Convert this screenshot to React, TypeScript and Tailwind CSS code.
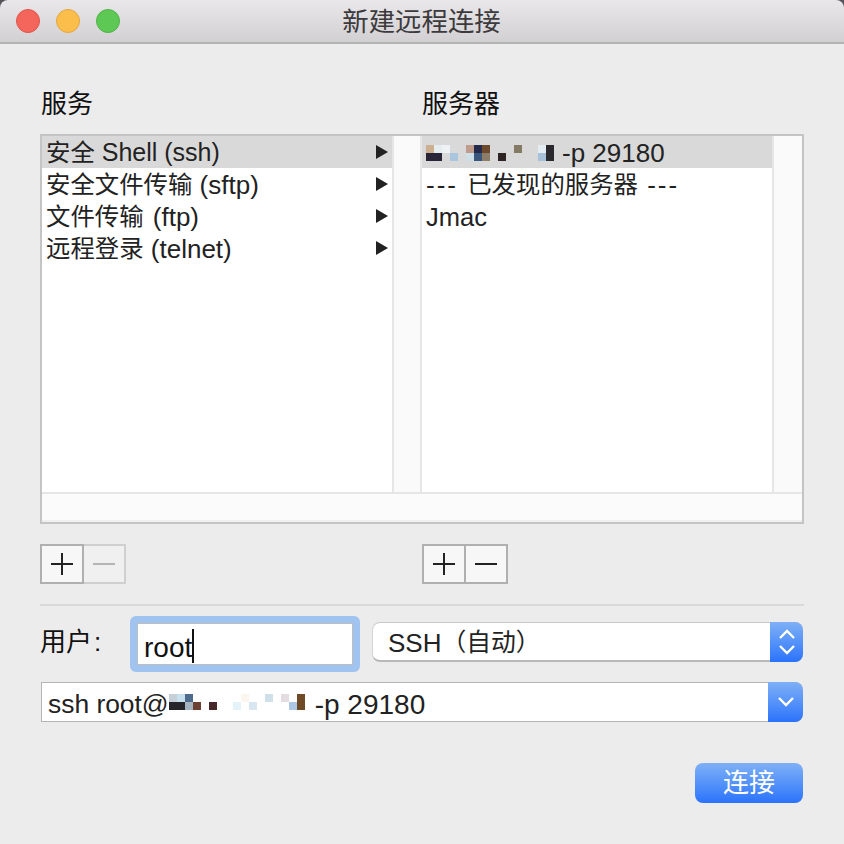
import React from 'react';

const FONT = "font-['Liberation_Sans','Noto_Sans_CJK_SC',sans-serif]";

type Block = [number, number, string];

// mosaic over the redacted host name
const hostA: Block[] = [
  [0, 0, '#cdb08f'], [0, 1, '#2a2438'], [1, 1, '#2a2438'], [1, 0, '#e6edf0'], [2, 0, '#eef2f4'], [3, 1, '#a9c6de'],
  [5, 0, '#bf9c8c'], [6, 0, '#242a4a'], [7, 0, '#6d4a2c'], [5, 1, '#cfdfe8'], [6, 1, '#37577d'], [7, 1, '#8d7c68'],
  [9, 1, '#2f2424'], [11, 0, '#857a63'], [14, 0, '#e3ecf2'], [14, 1, '#a7c1d9'], [15, 0, '#2a2a2e'], [15, 1, '#2a2a2e'],
];

const hostB: Block[] = [
  [0, 0, '#c5d0d8'], [1, 0, '#c6e0ee'], [2, 0, '#4d6b8c'], [0, 1, '#26262a'], [1, 1, '#26262a'], [2, 1, '#a3b3c0'],
  [3, 1, '#6d4034'], [5, 1, '#47282a'], [8, 1, '#e4f3fa'], [9, 0, '#fbf7ee'], [10, 1, '#d8e6f2'], [12, 0, '#cfe0ea'],
  [14, 0, '#e3dce0'], [15, 1, '#acc8e4'], [16, 0, '#6e4a26'], [16, 1, '#6e4a26'],
];

const Mosaic = ({ blocks, cols }: { blocks: Block[]; cols: number }) => (
  <svg width={cols * 8} height={16} className="shrink-0" shapeRendering="crispEdges">
    {blocks.map(([x, y, c], i) => (
      <rect key={i} x={x * 8} y={y * 8} width={8} height={8} fill={c} />
    ))}
  </svg>
);

const Cjk = ({ children }: { children: React.ReactNode }) => <span className="text-[24.4px]">{children}</span>;

const Row = ({ label, selected, arrow }: { label: React.ReactNode; selected?: boolean; arrow?: boolean }) => (
  <div className={`h-8 flex items-center justify-between pl-1 pr-1 text-[26px] text-[#222] whitespace-nowrap ${selected ? 'bg-[#d9d9d9]' : ''}`}>
    <span className="flex items-center whitespace-pre pt-[2px]">{label}</span>
    {arrow && (
      <svg width="12" height="14" viewBox="0 0 12 14" className="shrink-0">
        <path d="M0 0 L12 7 L0 14 Z" fill="#222" />
      </svg>
    )}
  </div>
);

const PlusMinus = ({ minusDisabled }: { minusDisabled?: boolean }) => (
  <div className="flex w-[86px] h-10">
    <div className="w-[44px] h-10 border-2 border-[#b0b0b0] bg-[#f7f7f7] flex items-center justify-center">
      <svg width="22" height="22" viewBox="0 0 22 22">
        <path d="M0 11 H22 M11 0 V22" stroke="#222" strokeWidth="2" />
      </svg>
    </div>
    <div className={`w-[42px] h-10 border-2 border-l-0 flex items-center justify-center ${minusDisabled ? 'border-[#cfcfcf] bg-[#f0f0f0]' : 'border-[#b0b0b0] bg-[#f7f7f7]'}`}>
      <svg width="22" height="22" viewBox="0 0 22 22">
        <path d="M0 11 H22" stroke={minusDisabled ? '#b4b4b4' : '#222'} strokeWidth="2" />
      </svg>
    </div>
  </div>
);

export default function App() {
  return (
    <div className={`w-[844px] h-[844px] bg-[#ececec] flex flex-col overflow-hidden ${FONT}`}>
      {/* title bar */}
      <div className="bg-[#55545a] shrink-0">
        <div className="h-[44px] relative flex items-center pl-4 gap-4 rounded-t-[8px] bg-gradient-to-b from-[#e9e7e9] to-[#d2d0d2] border-b-2 border-[#b4b3b4]">
          <div className="w-6 h-6 rounded-full bg-[#f4665c] border border-[#e2524a]" />
          <div className="w-6 h-6 rounded-full bg-[#fbbe4a] border border-[#e4a63e]" />
          <div className="w-6 h-6 rounded-full bg-[#5dc954] border border-[#4fb348]" />
          <div className="absolute inset-x-0 top-0 h-[44px] flex items-center justify-center pt-[1px] pr-[1px] text-[26.4px] text-[#3c3a3c] pointer-events-none">
            新建远程连接
          </div>
        </div>
      </div>

      <div className="flex-1 px-10 flex flex-col">
        {/* column headings */}
        <div className="flex mt-[42px] h-[34px] pt-[2px] items-center text-[26px] text-[#111]">
          <div className="w-[382px] pl-px">服务</div>
          <div>服务器</div>
        </div>

        {/* browser */}
        <div className="mt-[14px] w-[764px] h-[390px] border-2 border-[#c4c4c4] flex flex-col">
          <div className="flex h-[358px] bg-white border-b-2 border-[#e6e6e6]">
            <div className="w-[350px]">
              <Row label={<><Cjk>安全</Cjk><span className="text-[25px]"> Shell (ssh)</span></>} selected arrow />
              <Row label={<><Cjk>安全文件传输</Cjk> (sftp)</>} arrow />
              <Row label={<><Cjk>文件传输</Cjk><span className="ml-[2px]"> (ftp)</span></>} arrow />
              <Row label={<><Cjk>远程登录</Cjk> (telnet)</>} arrow />
            </div>
            <div className="w-[30px] bg-[#fafafa] border-x-2 border-[#e6e6e6]" />
            <div className="w-[350px]">
              <Row label={<><Mosaic blocks={hostA} cols={16} /><span className="ml-2">-p 29180</span></>} selected />
              <Row label={<><span className="tracking-[2px]">--- </span><Cjk>已发现的服务器</Cjk><span className="tracking-[2px]"> ---</span></>} />
              <Row label={<span className="text-[25.5px]">Jmac</span>} />
            </div>
            <div className="flex-1 bg-[#fafafa] border-l-2 border-[#e6e6e6]" />
          </div>
          <div className="flex-1 bg-[#fbfbfb] border-b-2 border-[#f0f0f0]" />
        </div>

        {/* add / remove */}
        <div className="mt-5 flex">
          <div className="w-[382px]"><PlusMinus minusDisabled /></div>
          <PlusMinus />
        </div>

        <div className="mt-5 h-[2px] w-[764px] bg-[#d9d9d9]" />

        {/* user + protocol */}
        <div className="mt-[10px] flex items-start h-[56px]">
          <div className="w-[90px] h-[52px] flex items-center text-[26px] text-[#111]">用户<span className="ml-[2px] text-[26px]">:</span></div>
          <div className="w-[230px] h-[56px] rounded-[6px] bg-[#a0c3ef] p-[7px]">
            <div className="h-full bg-white border border-[#bdbdbd] flex items-center pl-[6px] text-[28px] text-[#111]">
              <span className="pt-[7px]">root</span><span className="w-[2px] h-[34px] mt-[3px] bg-[#111]" />
            </div>
          </div>
          <div className="ml-3 mr-px mt-[6px] flex-1 h-10 flex rounded-lg bg-white border-t border-b-2 border-t-[#c8c8c8] border-b-[#b8b8b8] border-l border-l-[#d4d4d4]">
            <div className="flex-1 flex items-center pl-[15px] pt-[3px] text-[26px] text-[#222]">SSH<span className="text-[24.8px]">（自动）</span></div>
            <div className="w-[33px] -my-px -mb-[2px] rounded-r-lg bg-gradient-to-b from-[#7fb0f6] to-[#2a72fb] flex items-center justify-center">
              <svg width="16" height="28" viewBox="0 0 16 28" fill="none" stroke="#fff" strokeWidth="2.4">
                <path d="M1 10 L8 3 L15 10 M1 18 L8 25 L15 18" />
              </svg>
            </div>
          </div>
        </div>

        {/* command */}
        <div className="mt-[10px] ml-px mr-px h-10 flex bg-white border border-[#b4b4b4] border-r-0 rounded-r-lg">
          <div className="flex-1 flex items-center pl-[6px] pt-[5px] text-[26.4px] text-[#222] whitespace-nowrap">
            ssh root@<span className="-mt-[5px] flex"><Mosaic blocks={hostB} cols={17} /></span><span className="ml-[10px] text-[28px]">-p 29180</span>
          </div>
          <div className="w-[35px] -my-px rounded-r-lg bg-gradient-to-b from-[#7fb0f6] to-[#2a72fb] flex items-center justify-center">
            <svg width="16" height="10" viewBox="0 0 16 10" fill="none" stroke="#fff" strokeWidth="2.4">
              <path d="M1 1 L8 8 L15 1" />
            </svg>
          </div>
        </div>

        {/* connect */}
        <div className="mt-[41px] flex justify-end pr-px">
          <div className="w-[108px] h-10 rounded-lg bg-gradient-to-b from-[#7fb0f6] to-[#2a72fb] flex items-center justify-center text-[26px] text-white">
            连接
          </div>
        </div>
      </div>
    </div>
  );
}
